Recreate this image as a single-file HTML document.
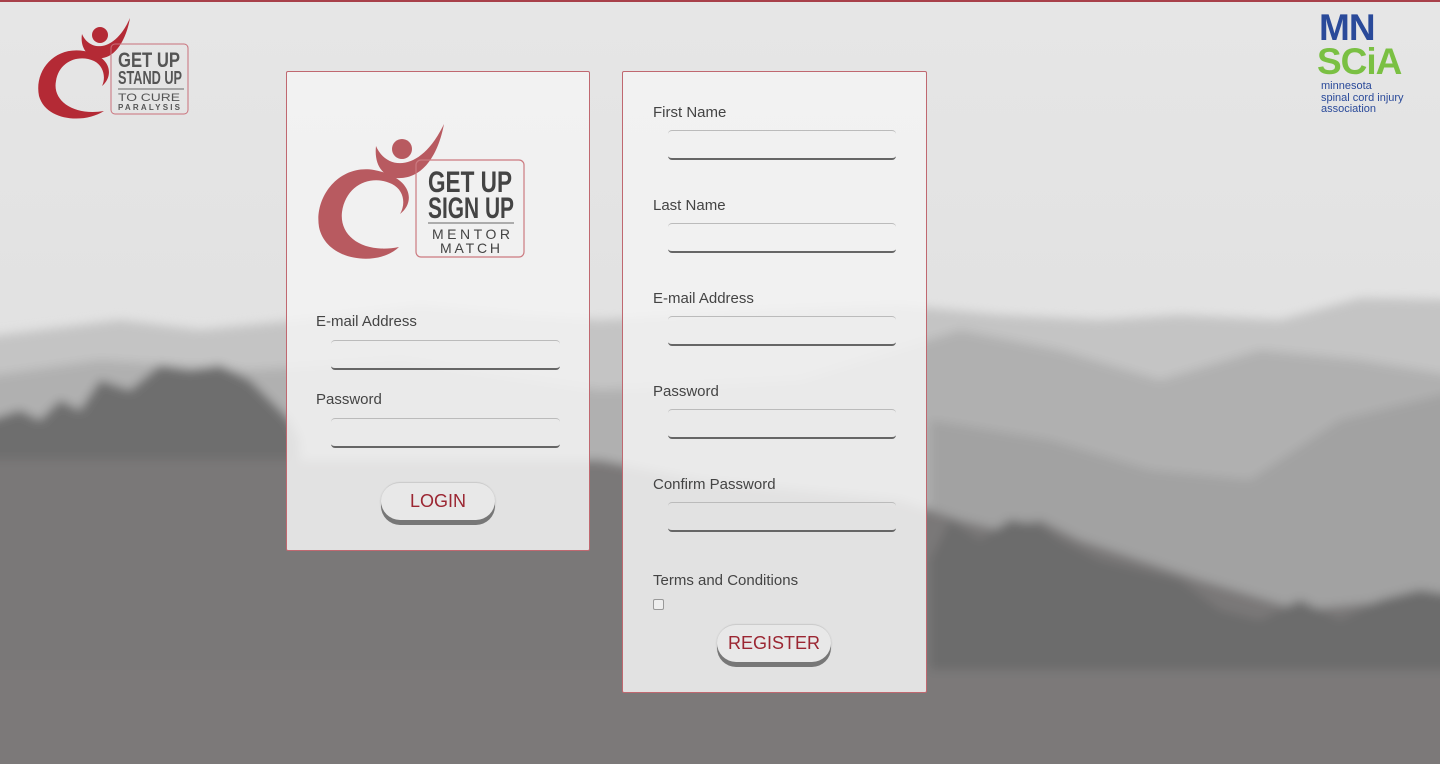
<!DOCTYPE html>
<html><head><meta charset="utf-8"><style>
html,body{margin:0;padding:0;width:1440px;height:764px;overflow:hidden;font-family:"Liberation Sans",sans-serif}
body{position:relative;background:#e8e8e8}
svg.bg{position:absolute;left:0;top:0;display:block;overflow:hidden}
.panel{position:absolute;background:rgba(243,243,243,0.86);border:1px solid #c06870;border-radius:2px;box-sizing:border-box}
.lbl{position:absolute;font-size:15px;color:#444}
.inp{position:absolute;height:30px;border-radius:4px;border-top:1px solid #bbb;border-bottom:2px solid #666;box-sizing:border-box}
.btn{position:absolute;height:38px;border-radius:19px;background:#e8e8e8;box-shadow:0 5px 0 #777, 0 1px 2px rgba(0,0,0,.2);color:#9b2632;font-size:18px;text-align:center;line-height:36px;border-top:1px solid #ccc;box-sizing:border-box}
</style></head><body>
<svg class="bg" width="1440" height="764" viewBox="0 0 1440 764">
<defs><linearGradient id="sky" x1="0" y1="0" x2="0" y2="1"><stop offset="0" stop-color="#e6e6e6"/><stop offset="1" stop-color="#dcdcdc"/></linearGradient>
<filter id="bl" x="-10%" y="-10%" width="120%" height="120%"><feGaussianBlur stdDeviation="5"/></filter></defs>
<rect width="1440" height="764" fill="url(#sky)"/>
<g filter="url(#bl)">
<path d="M-40 340 L120 320 L200 330 L300 320 L420 305 L520 315 L600 320 L760 310 L900 305 L1000 315 L1100 320 L1180 315 L1280 320 L1360 298 L1480 300 L1480 800 L-40 800Z" fill="#c4c4c4"/>
<path d="M-40 380 L100 360 L250 370 L400 360 L600 390 L800 380 L960 330 L1060 350 L1160 380 L1260 350 L1360 360 L1480 380 L1480 800 L-40 800Z" fill="#b0b0b0"/>
<path d="M930 420 L1050 440 L1150 470 L1250 480 L1340 420 L1480 385 L1480 800 L930 800Z" fill="#a2a2a2"/>
<path d="M-40 430 L20 410 L40 420 L60 400 L80 410 L100 380 L130 390 L160 365 L190 370 L220 365 L250 380 L270 400 L290 420 L300 440 L300 800 L-40 800Z" fill="#6e6e6e"/>
<path d="M-40 460 L600 460 L700 480 L900 500 L960 520 L1000 530 L1040 520 L1080 540 L1200 580 L1300 610 L1400 600 L1480 590 L1480 800 L-40 800Z" fill="#7a7878"/>
<path d="M930 560 L950 520 L980 540 L1010 520 L1040 525 L1060 540 L1100 560 L1140 570 L1180 580 L1220 610 L1260 620 L1300 600 L1340 620 L1380 600 L1420 590 L1480 600 L1480 800 L930 800Z" fill="#6c6c6c"/>
<rect x="-40" y="670" width="1520" height="130" fill="#7b7979"/>
</g>
<rect width="1440" height="2" fill="#a8404a"/>
</svg>

<svg style="position:absolute;left:34px;top:16px" width="160" height="106" viewBox="0 0 160 106">
<path d="M50 35 C20 30 0 55 5 80 C12 105 50 108 70 95 C40 100 18 85 22 65 C25 45 45 38 60 45 C70 50 72 62 68 70 C80 60 78 40 50 35Z" fill="#b42a35"/>
<circle cx="66" cy="19" r="8" fill="#b42a35"/>
<path d="M48 18 C55 35 80 38 96 2 C92 25 80 45 62 42 C52 40 46 30 48 18Z" fill="#b42a35"/>
<rect x="77" y="28" width="77" height="70" rx="4" fill="none" stroke="#c9707a" stroke-width="1"/>
<text x="84" y="51" font-weight="bold" font-size="21" fill="#555" textLength="62" lengthAdjust="spacingAndGlyphs">GET UP</text>
<text x="84" y="68" font-weight="bold" font-size="18" fill="#555" textLength="64" lengthAdjust="spacingAndGlyphs">STAND UP</text>
<line x1="84" y1="73" x2="150" y2="73" stroke="#666"/>
<text x="84" y="85" font-size="11" fill="#555" textLength="62" lengthAdjust="spacingAndGlyphs">TO CURE</text>
<text x="84" y="94" font-size="8" font-weight="bold" fill="#555" textLength="62">PARALYSIS</text>
</svg>

<div style="position:absolute;left:1319px;top:12px;font-weight:bold;font-size:37px;line-height:32px;color:#2a4a9a;letter-spacing:-1px">MN</div>
<div style="position:absolute;left:1317px;top:46px;font-weight:bold;font-size:37px;line-height:32px;color:#7ac043;letter-spacing:-1px">SCiA</div>
<div style="position:absolute;left:1321px;top:81px;font-size:11px;line-height:11.5px;color:#2a4a9a">minnesota<br>spinal cord injury<br>association</div>

<div class="panel" style="left:286px;top:71px;width:304px;height:480px"></div>
<svg style="position:absolute;left:314px;top:122px" width="214" height="143" viewBox="0 0 214 143">
<path d="M60 48 C25 42 0 75 5 105 C12 140 65 145 85 125 C50 132 25 115 28 90 C32 62 58 52 78 62 C90 68 92 82 86 92 C102 80 98 55 60 48Z" fill="#b85a60"/>
<circle cx="88" cy="27" r="10" fill="#b85a60"/>
<path d="M62 24 C72 48 106 52 130 2 C124 34 108 58 82 56 C68 54 60 42 62 24Z" fill="#b85a60"/>
<rect x="102" y="38" width="108" height="97" rx="5" fill="none" stroke="#cc7a80" stroke-width="1.2"/>
<text x="114" y="70" font-weight="bold" font-size="30" fill="#444" textLength="84" lengthAdjust="spacingAndGlyphs">GET UP</text>
<text x="114" y="96" font-weight="bold" font-size="30" fill="#444" textLength="86" lengthAdjust="spacingAndGlyphs">SIGN UP</text>
<line x1="114" y1="101" x2="200" y2="101" stroke="#666"/>
<text x="118" y="117" font-size="14" fill="#444" textLength="78">MENTOR</text>
<text x="126" y="131" font-size="14" fill="#444" textLength="60">MATCH</text>
</svg>
<div class="lbl" style="left:316px;top:313px">E-mail Address</div>
<div class="inp" style="left:331px;top:340px;width:229px"></div>
<div class="lbl" style="left:316px;top:391px">Password</div>
<div class="inp" style="left:331px;top:418px;width:229px"></div>
<div class="btn" style="left:381px;top:482px;width:114px">LOGIN</div>

<div class="panel" style="left:622px;top:71px;width:305px;height:622px"></div>
<div class="lbl" style="left:653px;top:104px">First Name</div>
<div class="inp" style="left:668px;top:130px;width:228px"></div>
<div class="lbl" style="left:653px;top:197px">Last Name</div>
<div class="inp" style="left:668px;top:223px;width:228px"></div>
<div class="lbl" style="left:653px;top:290px">E-mail Address</div>
<div class="inp" style="left:668px;top:316px;width:228px"></div>
<div class="lbl" style="left:653px;top:383px">Password</div>
<div class="inp" style="left:668px;top:409px;width:228px"></div>
<div class="lbl" style="left:653px;top:476px">Confirm Password</div>
<div class="inp" style="left:668px;top:502px;width:228px"></div>
<div class="lbl" style="left:653px;top:572px">Terms and Conditions</div>
<div style="position:absolute;left:653px;top:599px;width:9px;height:9px;border:1px solid #999;border-radius:2px;background:#eee"></div>
<div class="btn" style="left:717px;top:624px;width:114px">REGISTER</div>
</body></html>
